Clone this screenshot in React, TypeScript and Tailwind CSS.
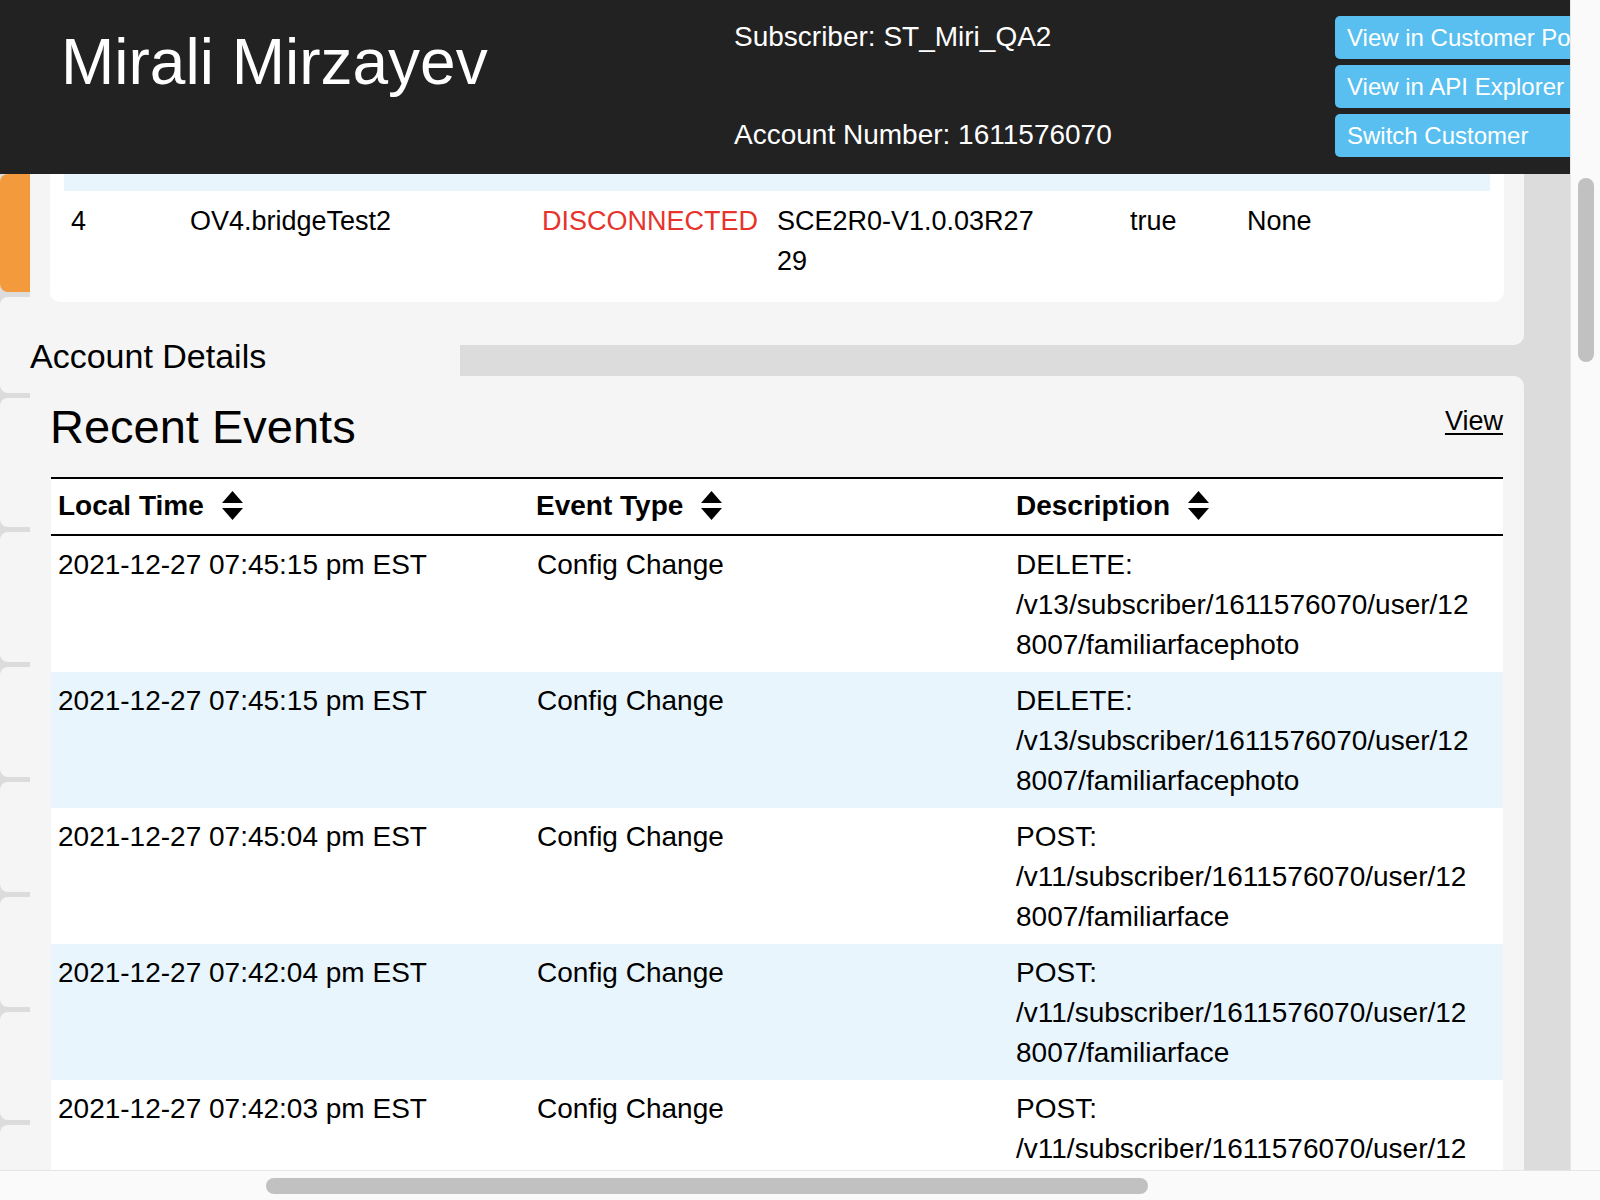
import React from "react";

const events = [
  { time: "2021-12-27 07:45:15 pm EST", type: "Config Change", method: "DELETE", path: "/v13/subscriber/1611576070/user/128007/familiarfacephoto" },
  { time: "2021-12-27 07:45:15 pm EST", type: "Config Change", method: "DELETE", path: "/v13/subscriber/1611576070/user/128007/familiarfacephoto" },
  { time: "2021-12-27 07:45:04 pm EST", type: "Config Change", method: "POST", path: "/v11/subscriber/1611576070/user/128007/familiarface" },
  { time: "2021-12-27 07:42:04 pm EST", type: "Config Change", method: "POST", path: "/v11/subscriber/1611576070/user/128007/familiarface" },
  { time: "2021-12-27 07:42:03 pm EST", type: "Config Change", method: "POST", path: "/v11/subscriber/1611576070/user/128007/familiarface" },
  { time: "2021-12-27 07:41:50 pm EST", type: "Config Change", method: "POST", path: "/v11/subscriber/1611576070/user/128007/familiarface" },
];

// left side tabs (only their right edge peeks out)
const tabs = ["h-[96px]", "h-[129px]", "h-[130px]", "h-[110px]", "h-[110px]", "h-[110px]", "h-[108px]"];

function SortIcon() {
  return (
    <svg width="21" height="30" viewBox="0 0 21 30" className="ml-[18px] shrink-0">
      <path d="M10.5 0 L21 12 L0 12 Z" fill="#000" />
      <path d="M0 17 L21 17 L10.5 29 Z" fill="#000" />
    </svg>
  );
}

function Header() {
  return (
    <div className="h-[174px] shrink-0 bg-[#222222] flex text-white overflow-hidden">
      <div className="w-[734px] shrink-0 pl-[61px] pt-[30px]">
        <h1 className="text-[64px] leading-[64px] whitespace-nowrap">Mirali Mirzayev</h1>
      </div>
      <div className="w-[601px] shrink-0 pt-[17px] text-[28px] leading-[40px]">
        <div className="whitespace-nowrap">Subscriber: ST_Miri_QA2</div>
        <div className="mt-[58px] whitespace-nowrap">Account Number: 1611576070</div>
      </div>
      <div className="w-[281px] shrink-0 pt-[16px] flex flex-col gap-[6px]">
        {["View in Customer Portal", "View in API Explorer", "Switch Customer"].map((b) => (
          <button
            key={b}
            className="h-[43px] w-full text-left pl-[12px] bg-[#58bff0] rounded-[5px] text-[24px] leading-[43px] text-white whitespace-nowrap"
          >
            {b}
          </button>
        ))}
      </div>
    </div>
  );
}

function DevicePanel() {
  return (
    <div className="bg-[#f5f5f5] rounded-br-[10px] px-[20px] pb-[43px]">
      <div className="bg-white rounded-b-[10px] px-[14px] pb-[11px]">
        <div className="h-[17px] bg-[#e8f5fc]" />
        <div className="flex py-[10px] text-[27px] leading-[40px]">
          <div className="w-[119px] pl-[7px]">4</div>
          <div className="w-[351px] pl-[7px]">OV4.bridgeTest2</div>
          <div className="w-[236px] pl-[8px] text-[#e8332c]">DISCONNECTED</div>
          <div className="w-[352px] pl-[7px]">
            <div className="w-[264px] break-all">SCE2R0-V1.0.03R2729</div>
          </div>
          <div className="w-[117px] pl-[8px]">true</div>
          <div className="flex-1 pl-[8px]">None</div>
        </div>
      </div>
    </div>
  );
}

function EventsPanel() {
  return (
    <div className="flex-1 min-h-0 overflow-hidden bg-[#f5f5f5] rounded-tr-[10px] px-[21px] pt-[25px]">
      <div className="flex items-start justify-between h-[53px]">
        <h2 className="text-[47px] leading-[54px] -ml-[1px] -mt-[1px]">Recent Events</h2>
        <a href="#" className="text-[27px] leading-[40px] underline underline-offset-[3px]">
          View
        </a>
      </div>
      <div className="mt-[23px]">
        <div className="flex bg-white border-y-2 border-black pt-[7px] pb-[8px] text-[28px] leading-[40px] font-bold">
          <div className="w-[478px] pl-[7px] flex items-center">
            Local Time
            <SortIcon />
          </div>
          <div className="w-[480px] pl-[7px] flex items-center">
            Event Type
            <SortIcon />
          </div>
          <div className="flex-1 pl-[7px] flex items-center">
            Description
            <SortIcon />
          </div>
        </div>
        {events.map((e, i) => (
          <div
            key={i}
            className={`flex pt-[9px] pb-[7px] text-[28px] leading-[40px] ${i % 2 === 1 ? "bg-[#e8f5fc]" : "bg-white"}`}
          >
            <div className="w-[478px] pl-[7px] whitespace-nowrap">{e.time}</div>
            <div className="w-[480px] pl-[8px]">{e.type}</div>
            <div className="flex-1 pl-[7px]">
              <div className="w-[462px]">
                <div>{e.method}:</div>
                <div className="break-all">{e.path}</div>
              </div>
            </div>
          </div>
        ))}
      </div>
    </div>
  );
}

export default function App() {
  return (
    <div className="w-[1600px] h-[1200px] flex flex-col overflow-hidden text-black font-['Liberation_Sans',Arial,Helvetica,sans-serif]">
      <div className="h-[1170px] flex">
        <div className="w-[1570px] flex flex-col overflow-hidden bg-[#dcdcdc]">
          <Header />
          <div className="flex-1 min-h-0 flex">
            {/* tab strip */}
            <div className="w-[30px] shrink-0 flex flex-col gap-[5px]">
              <div className="h-[118px] shrink-0 bg-[#f39b3c] rounded-l-[8px]" />
              {tabs.map((h, i) => (
                <div key={i} className={`${h} shrink-0 bg-[#f5f5f5] rounded-l-[8px]`} />
              ))}
              <div className="flex-1 bg-[#f5f5f5] rounded-tl-[8px]" />
            </div>
            {/* main column */}
            <div className="w-[1494px] shrink-0 flex flex-col">
              <DevicePanel />
              <div className="h-[31px] shrink-0 flex">
                <div className="w-[430px] bg-[#f5f5f5] text-[34px] leading-[23px] whitespace-nowrap">
                  Account Details
                </div>
              </div>
              <EventsPanel />
            </div>
          </div>
        </div>
        {/* vertical scrollbar */}
        <div className="flex-1 bg-[#fafafa] border-l border-[#e6e6e6] pt-[178px] pl-[7px]">
          <div className="w-[16px] h-[184px] rounded-full bg-[#c1c1c1]" />
        </div>
      </div>
      {/* horizontal scrollbar */}
      <div className="h-[30px] bg-[#fafafa] border-t border-[#e6e6e6] pl-[266px] pt-[7px]">
        <div className="w-[882px] h-[16px] rounded-full bg-[#c1c1c1]" />
      </div>
    </div>
  );
}
